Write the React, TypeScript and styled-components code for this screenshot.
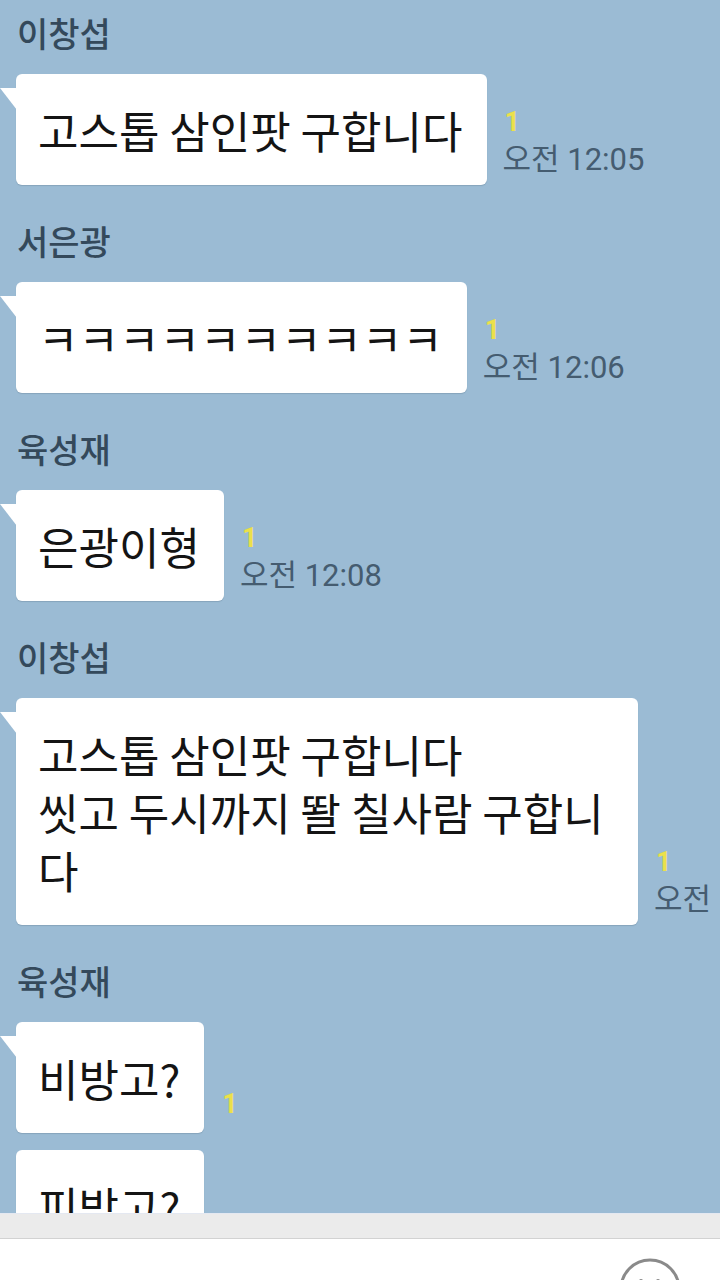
import React from "react";
import styled, { createGlobalStyle } from "styled-components";

const GlobalStyle = createGlobalStyle`
  html, body {
    margin: 0;
    padding: 0;
  }
  body {
    width: 720px;
    height: 1280px;
    overflow: hidden;
    background: #ffffff;
    font-family: "Noto Sans CJK KR", "Noto Sans", sans-serif;
  }
`;

const Screen = styled.div`
  width: 720px;
  height: 1280px;
  display: flex;
  flex-direction: column;
  overflow: hidden;
`;

const ChatArea = styled.div`
  height: 1213px;
  flex-shrink: 0;
  box-sizing: border-box;
  overflow: hidden;
  background: #9bbbd4;
  padding: 11px 0 0 16px;
  display: flex;
  flex-direction: column;
`;

const Group = styled.div`
  display: flex;
  flex-direction: column;
  margin-bottom: 34px;
`;

const SenderName = styled.div`
  font-size: 34px;
  font-weight: 500;
  line-height: 44px;
  color: #34495b;
  margin: 0 0 19px 1px;
`;

const Row = styled.div`
  display: flex;
  align-items: flex-end;
  gap: 16px;
  margin-bottom: 17px;

  &:last-child {
    margin-bottom: 0;
  }
`;

const Bubble = styled.div<{ $tail: boolean }>`
  position: relative;
  flex-shrink: 0;
  max-width: 576px;
  padding: 27px 24px 26px 22px;
  background: #ffffff;
  border-radius: 6px;
  box-shadow: 0 1px 1px rgba(40, 60, 80, 0.18);
  font-size: 44px;
  line-height: 58px;
  color: #141414;
  word-break: break-all;

  &::before {
    content: "";
    display: ${(p) => (p.$tail ? "block" : "none")};
    position: absolute;
    left: -16px;
    top: 14px;
    width: 17px;
    height: 22px;
    background: #ffffff;
    clip-path: polygon(0 0, 100% 0, 100% 100%);
  }
`;

const Meta = styled.div`
  display: flex;
  flex-direction: column;
  align-items: flex-start;
  flex-shrink: 0;
  margin-bottom: 8px;
  white-space: nowrap;
`;

const ReadCount = styled.span`
  font-family: Roboto, sans-serif;
  font-size: 27px;
  font-weight: 700;
  line-height: 30px;
  color: #ebe04a;
  margin: 0 0 6px 2px;
`;

const Time = styled.span`
  font-family: Roboto, "Noto Sans CJK KR", sans-serif;
  font-size: 31px;
  line-height: 34px;
  color: #455c70;
`;

const StatusStrip = styled.div`
  height: 24px;
  flex-shrink: 0;
  background: #ebebeb;
  border-top: 1px solid #e4e8f1;
  border-bottom: 1px solid #d2d2d2;
`;

const InputBar = styled.div`
  flex: 1;
  display: flex;
  justify-content: flex-end;
  align-items: flex-start;
  padding: 18px 38px 0 0;
  background: #ffffff;
`;

type Msg = { text: string; time?: string };
type ChatGroup = { name: string; msgs: Msg[] };

const chat: ChatGroup[] = [
  { name: "이창섭", msgs: [{ text: "고스톱 삼인팟 구합니다", time: "오전 12:05" }] },
  { name: "서은광", msgs: [{ text: "ㅋㅋㅋㅋㅋㅋㅋㅋㅋㅋ", time: "오전 12:06" }] },
  { name: "육성재", msgs: [{ text: "은광이형", time: "오전 12:08" }] },
  {
    name: "이창섭",
    msgs: [
      {
        text: "고스톱 삼인팟 구합니다\n씻고 두시까지 똴 칠사람 구합니다",
        time: "오전 12:10",
      },
    ],
  },
  { name: "육성재", msgs: [{ text: "비방고?" }, { text: "피방고?" }] },
];

const SmileIcon = () => (
  <svg width="64" height="64" viewBox="0 0 64 64">
    <circle cx="32" cy="32" r="29" fill="none" stroke="#8a8a8a" strokeWidth="3" />
    <ellipse cx="23" cy="26" rx="2.5" ry="4" fill="#8a8a8a" />
    <ellipse cx="40" cy="26" rx="2.5" ry="4" fill="#8a8a8a" />
    <path d="M19 38 Q32 50 45 38" fill="none" stroke="#8a8a8a" strokeWidth="3" strokeLinecap="round" />
  </svg>
);

const MessageText = ({ text }: { text: string }) => (
  <>
    {text.split("\n").map((line, i) => (
      <div key={i}>{line}</div>
    ))}
  </>
);

export default function App() {
  return (
    <Screen>
      <GlobalStyle />
      <ChatArea>
        {chat.map((g, gi) => (
          <Group key={gi}>
            <SenderName>{g.name}</SenderName>
            {g.msgs.map((m, mi) => (
              <Row key={mi}>
                <Bubble $tail={mi === 0}>
                  <MessageText text={m.text} />
                </Bubble>
                {mi === 0 && (
                  <Meta>
                    <ReadCount>1</ReadCount>
                    {m.time && g.msgs.length === 1 && <Time>{m.time}</Time>}
                  </Meta>
                )}
              </Row>
            ))}
          </Group>
        ))}
      </ChatArea>
      <StatusStrip />
      <InputBar>
        <SmileIcon />
      </InputBar>
    </Screen>
  );
}
